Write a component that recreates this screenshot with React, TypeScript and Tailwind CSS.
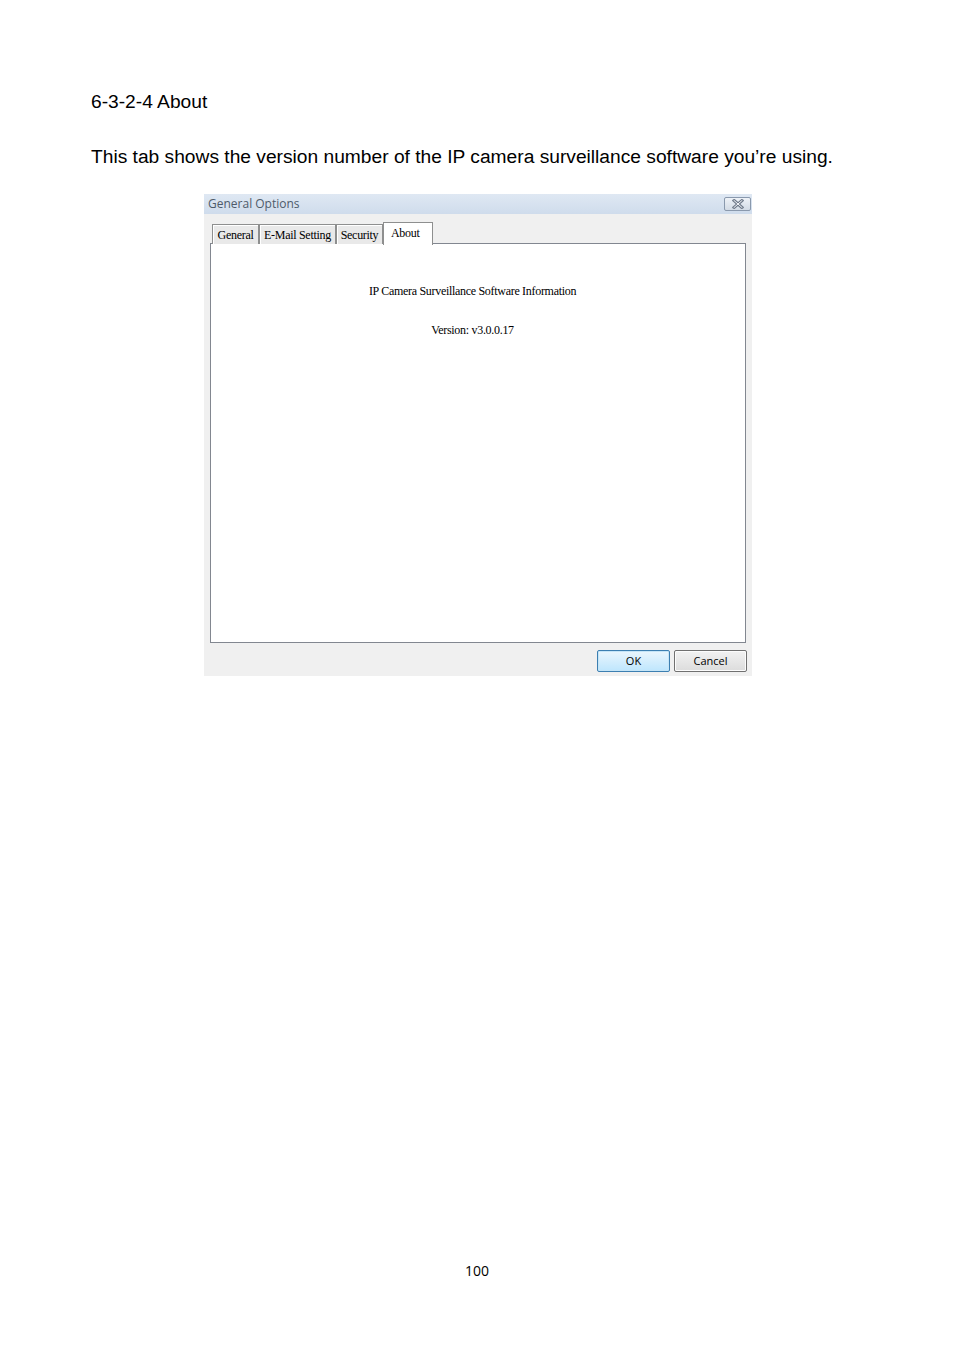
import React from "react";

const serif = { fontFamily: '"Liberation Serif", "Times New Roman", serif' };

function Tab({ label, w }: { label: string; w: string }) {
  return (
    <div
      className={`${w} h-[20px] mt-[2px] flex items-center justify-center border border-b-0 border-[#8e8f8f] bg-[#e9e9e9] text-[12px] text-black shadow-[inset_1px_1px_0_#ffffff] tracking-[-0.3px]`}
      style={serif}
    >
      {label}
    </div>
  );
}

export default function App() {
  return (
    <div className="w-[954px] h-[1351px] bg-white relative" style={{ fontFamily: '"Liberation Sans", Arial, sans-serif' }}>
      <div className="pt-[91px] pl-[91px]">
        <div className="text-[19.2px] leading-[22px] text-black">6-3-2-4 About</div>
        <div className="mt-[33px] text-[19.2px] leading-[22px] text-black">
          This tab shows the version number of the IP camera surveillance software you’re using.
        </div>
        <div className="mt-[26px] ml-[113px] w-[548px] h-[482px] flex flex-col bg-[#f0f0f0]">
          {/* title bar */}
          <div className="h-[20px] flex items-center justify-between pl-[4px] pr-[1px] bg-gradient-to-b from-[#dfe8f3] to-[#cfdcec]">
            <span className="text-[12px] text-[#4e5b6a] leading-none" style={{ fontFamily: '"Open Sans", "Noto Sans", sans-serif' }}>
              General Options
            </span>
            <div className="w-[27px] h-[14px] rounded-[2px] border border-[#8a99ad] bg-gradient-to-b from-[#eef2f7] to-[#d3dbe5] flex items-center justify-center">
              <svg width="12" height="10" viewBox="0 0 12 10">
                <path d="M2 1.5 L10 8.5 M10 1.5 L2 8.5" stroke="#6f7a8a" strokeWidth="3" strokeLinecap="square" />
                <path d="M2 1.5 L10 8.5 M10 1.5 L2 8.5" stroke="#f4f6f9" strokeWidth="1" strokeLinecap="square" />
              </svg>
            </div>
          </div>
          {/* body */}
          <div className="flex-1 flex flex-col pt-[8px] pl-[6px] pr-[6px] pb-[4px]">
            <div className="flex h-[22px] pl-[2px] relative z-10">
              <Tab label="General" w="w-[47px]" />
              <Tab label="E-Mail Setting" w="w-[77px]" />
              <Tab label="Security" w="w-[47px]" />
              <div
                className="w-[50px] h-[23px] border border-b-0 border-[#8e8f8f] bg-white flex items-start justify-start pl-[7px] pt-[1px] text-[12px] text-black tracking-[-0.3px]"
                style={serif}
              >
                About
              </div>
            </div>
            <div className="-mt-[1px] h-[400px] border border-[#828790] bg-white flex flex-col items-center pt-[40px] pr-[11px] text-[12px] text-black tracking-[-0.3px]" style={serif}>
              <div className="leading-[14px]">IP Camera Surveillance Software Information</div>
              <div className="mt-[25px] leading-[14px]">Version: v3.0.0.17</div>
            </div>
            <div className="flex justify-end gap-[4px] mt-[7px] -mr-[1px]">
              <div
                className="w-[73px] h-[22px] rounded-[2px] border border-[#3c7fb1] bg-gradient-to-b from-[#eaf6fd] to-[#bee6fd] shadow-[inset_0_0_0_1px_#c5e5f7] flex items-center justify-center text-[11px] text-black"
                style={{ fontFamily: '"Open Sans", "Noto Sans", sans-serif' }}
              >
                OK
              </div>
              <div
                className="w-[73px] h-[22px] rounded-[2px] border border-[#707070] bg-gradient-to-b from-[#f2f2f2] to-[#dcdcdc] shadow-[inset_0_0_0_1px_#fcfcfc] flex items-center justify-center text-[11px] text-black"
                style={{ fontFamily: '"Open Sans", "Noto Sans", sans-serif' }}
              >
                Cancel
              </div>
            </div>
          </div>
        </div>
      </div>
      <div className="mt-[586px] text-center text-[14px] leading-[18px] text-black" style={{ fontFamily: '"Open Sans", "Liberation Sans", sans-serif' }}>
        100
      </div>
    </div>
  );
}
